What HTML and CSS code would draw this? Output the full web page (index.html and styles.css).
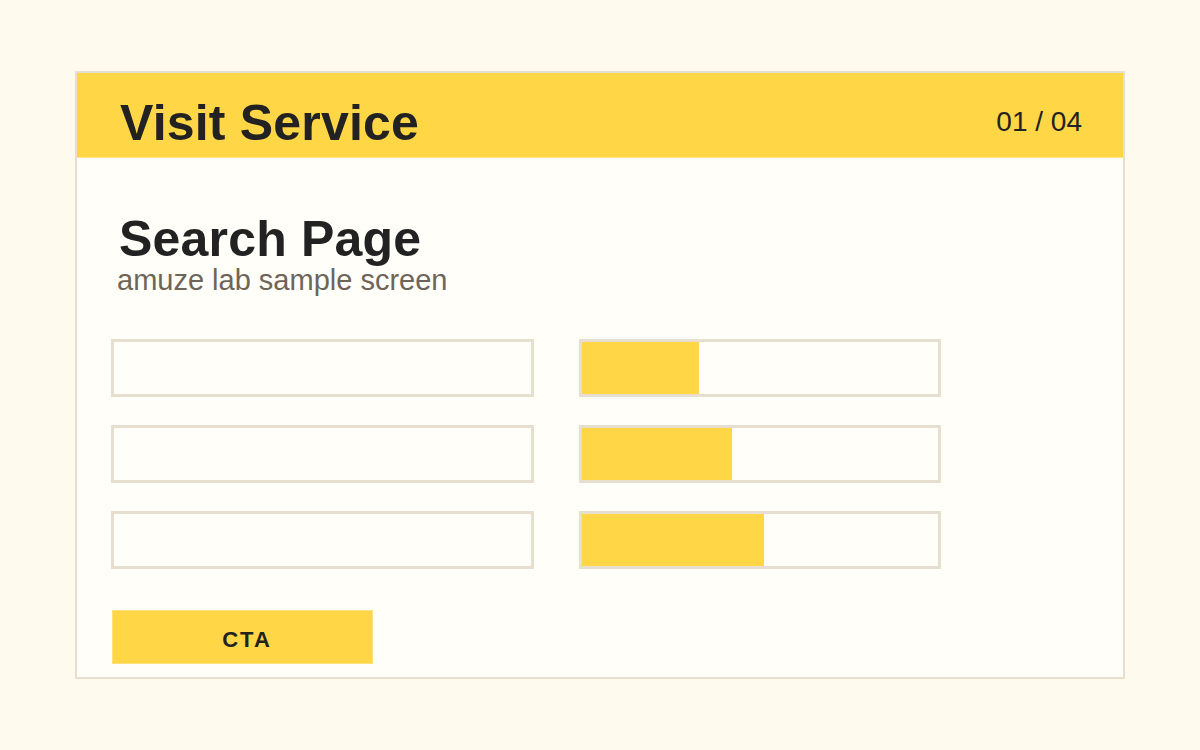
FILE: index.html
```html
<!DOCTYPE html>
<html lang="en">
<head>
<meta charset="utf-8">
<title>Visit Service — Search Page</title>
<link rel="stylesheet" href="styles.css">
</head>
<body>
  <main class="card">
    <header class="card-head">
      <h1 class="service-title">Visit Service</h1>
      <span class="pager">01 / 04</span>
    </header>
    <section class="card-body">
      <h2 class="page-title">Search Page</h2>
      <p class="page-sub">amuze lab sample screen</p>
      <div class="form-grid">
        <div class="field"></div>
        <div class="meter"><div class="meter-fill" style="width:33%"></div></div>
        <div class="field"></div>
        <div class="meter"><div class="meter-fill" style="width:42%"></div></div>
        <div class="field"></div>
        <div class="meter"><div class="meter-fill" style="width:51%"></div></div>
      </div>
      <button class="cta" type="button">CTA</button>
    </section>
  </main>
</body>
</html>
```

FILE: styles.css
```css
* {
  box-sizing: border-box;
}

html, body {
  margin: 0;
  padding: 0;
}

body {
  min-height: 100vh;
  background: #fff9ee;
  font-family: "Liberation Sans", Arial, sans-serif;
  color: #222222;
  display: flex;
  align-items: center;
  justify-content: center;
}

.card {
  width: 1050px;
  height: 608px;
  background: #fffef8;
  border: 2px solid #e6dfd0;
  display: flex;
  flex-direction: column;
}

/* yellow title strip */
.card-head {
  height: 85px;
  flex: none;
  background: #ffd645;
  border-bottom: 1px solid #ffe48a;
  display: flex;
  justify-content: space-between;
  align-items: flex-start;
  padding: 0 41px 0 43px;
}

.service-title {
  margin: 25px 0 0;
  font-size: 50px;
  line-height: 1;
  font-weight: 700;
  letter-spacing: 0.2px;
}

.pager {
  margin-top: 35px;
  font-size: 28px;
  line-height: 1;
}

.card-body {
  flex: 1;
  padding: 56px 34px 13px;
  display: flex;
  flex-direction: column;
  align-items: flex-start;
}

.page-title {
  margin: 0 0 2px 8px;
  font-size: 50px;
  line-height: 1;
  font-weight: 700;
  letter-spacing: 0.2px;
}

.page-sub {
  margin: 0 0 44px 6px;
  font-size: 29px;
  line-height: 1;
  color: #6e6558;
}

.form-grid {
  display: grid;
  grid-template-columns: 423px 362px;
  column-gap: 45px;
  row-gap: 28px;
}

.field,
.meter {
  height: 58px;
  border: 3px solid #e6dfd0;
  background: #fffef8;
}

.meter-fill {
  height: 100%;
  background: #ffd645;
}

.cta {
  margin: 41px 0 0 1px;
  width: 261px;
  height: 54px;
  background: #ffd645;
  border: 1px solid #ffe07a;
  font-family: "Liberation Sans", Arial, sans-serif;
  font-size: 22px;
  font-weight: 700;
  letter-spacing: 2px;
  color: #222222;
  padding: 5px 0 0 9px;
  cursor: pointer;
}
```
